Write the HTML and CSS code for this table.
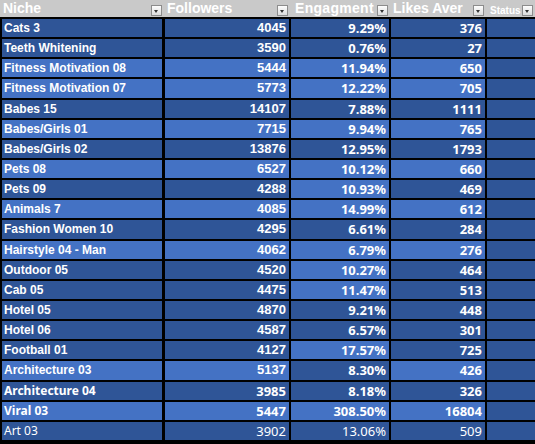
FILE: index.html
```html
<!DOCTYPE html>
<html lang="en">
<head>
  <meta charset="UTF-8">
  <meta name="viewport" content="width=device-width, initial-scale=1.0">
  <title>Niche stats</title>
  <link rel="stylesheet" href="styles.css">
</head>
<body>
  <div class="head">
    <div class="hcell"><span>Niche</span><i class="dd"></i></div>
    <div class="hcell"><span>Followers</span><i class="dd"></i></div>
    <div class="hcell eng"><span>Engagment</span><i class="dd"></i></div>
    <div class="hcell"><span>Likes Aver</span><i class="dd"></i></div>
    <div class="hcell small"><span>Status</span><i class="dd"></i></div>
  </div>

  <div class="rows">
    <div class="row arial"><div class="c dk">Cats 3</div><div class="c dk n">4045</div><div class="c dk n cal">9.29%</div><div class="c dk n cal">376</div><div class="c dk"></div></div>
    <div class="row arial"><div class="c dk">Teeth Whitening</div><div class="c dk n">3590</div><div class="c dk n cal">0.76%</div><div class="c dk n cal">27</div><div class="c dk"></div></div>
    <div class="row arial"><div class="c lt">Fitness Motivation 08</div><div class="c lt n">5444</div><div class="c lt n cal">11.94%</div><div class="c lt n cal">650</div><div class="c dk"></div></div>
    <div class="row arial"><div class="c lt">Fitness Motivation 07</div><div class="c lt n">5773</div><div class="c lt n cal">12.22%</div><div class="c lt n cal">705</div><div class="c dk"></div></div>
    <div class="row arial"><div class="c dk">Babes 15</div><div class="c dk n">14107</div><div class="c dk n cal">7.88%</div><div class="c dk n cal">1111</div><div class="c dk"></div></div>
    <div class="row arial"><div class="c lt">Babes/Girls 01</div><div class="c lt n">7715</div><div class="c lt n cal">9.94%</div><div class="c lt n cal">765</div><div class="c dk"></div></div>
    <div class="row arial"><div class="c dk">Babes/Girls 02</div><div class="c dk n">13876</div><div class="c dk n cal">12.95%</div><div class="c dk n cal">1793</div><div class="c dk"></div></div>
    <div class="row arial"><div class="c lt">Pets 08</div><div class="c lt n">6527</div><div class="c lt n cal">10.12%</div><div class="c lt n cal">660</div><div class="c dk"></div></div>
    <div class="row arial"><div class="c dk">Pets 09</div><div class="c dk n">4288</div><div class="c lt n cal">10.93%</div><div class="c dk n cal">469</div><div class="c dk"></div></div>
    <div class="row arial"><div class="c lt">Animals 7</div><div class="c lt n">4085</div><div class="c lt n cal">14.99%</div><div class="c lt n cal">612</div><div class="c dk"></div></div>
    <div class="row arial"><div class="c dk">Fashion Women 10</div><div class="c dk n">4295</div><div class="c dk n cal">6.61%</div><div class="c dk n cal">284</div><div class="c dk"></div></div>
    <div class="row arial"><div class="c lt">Hairstyle 04 - Man</div><div class="c lt n">4062</div><div class="c lt n cal">6.79%</div><div class="c lt n cal">276</div><div class="c dk"></div></div>
    <div class="row arial"><div class="c dk">Outdoor 05</div><div class="c dk n">4520</div><div class="c lt n cal">10.27%</div><div class="c dk n cal">464</div><div class="c dk"></div></div>
    <div class="row arial"><div class="c dk">Cab 05</div><div class="c dk n">4475</div><div class="c lt n cal">11.47%</div><div class="c dk n cal">513</div><div class="c dk"></div></div>
    <div class="row arial"><div class="c dk">Hotel 05</div><div class="c dk n">4870</div><div class="c dk n cal">9.21%</div><div class="c dk n cal">448</div><div class="c dk"></div></div>
    <div class="row arial"><div class="c dk">Hotel 06</div><div class="c dk n">4587</div><div class="c dk n cal">6.57%</div><div class="c dk n cal">301</div><div class="c dk"></div></div>
    <div class="row arial"><div class="c dk">Football 01</div><div class="c dk n">4127</div><div class="c lt n cal">17.57%</div><div class="c dk n cal">725</div><div class="c dk"></div></div>
    <div class="row arial"><div class="c lt">Architecture 03</div><div class="c lt n">5137</div><div class="c dk n cal">8.30%</div><div class="c lt n cal">426</div><div class="c dk"></div></div>
    <div class="row"><div class="c dk cal name">Architecture 04</div><div class="c dk n cal">3985</div><div class="c dk n cal">8.18%</div><div class="c dk n cal">326</div><div class="c dk"></div></div>
    <div class="row"><div class="c lt cal name">Viral 03</div><div class="c lt n cal">5447</div><div class="c lt n cal">308.50%</div><div class="c lt n cal">16804</div><div class="c dk"></div></div>
    <div class="row plain"><div class="c dk cal name">Art 03</div><div class="c dk n cal">3902</div><div class="c dk n cal">13.06%</div><div class="c dk n cal">509</div><div class="c dk"></div></div>
  </div>
</body>
</html>
```

FILE: styles.css
```css
body{
  margin: 0;
  background: #000;
  overflow: hidden;
  font-family: "Liberation Sans", Arial, sans-serif;
  color: #fff;
}

/* header strip */
.head{
  display: grid;
  grid-template-columns: 164px 126px 100px 96px 1fr;
  height: 17px;
  background: #c9c9c9;
  font-weight: bold;
  font-size: 14px;
  line-height: 17px;
}
.hcell{
  display: flex;
  align-items: center;
  justify-content: space-between;
  padding: 0 2px 0 3px;
  overflow: hidden;
  white-space: nowrap;
}
.hcell.eng{
  padding-left: 5px;
  letter-spacing: 0.3px;
}
.hcell.small{
  font-size: 10px;
  padding-left: 4px;
}
.hcell.small span{
  padding-top: 3px;
}
.dd{
  position: relative;
  flex: none;
  width: 9px;
  height: 9px;
  margin-top: 3px;
  border: 1px solid #8c8c8c;
  background: linear-gradient(#fdfdfd, #dcdcdc);
}
.dd::after{
  content: "";
  position: absolute;
  left: 2px;
  top: 4px;
  border-left: 2.5px solid transparent;
  border-right: 2.5px solid transparent;
  border-top: 3px solid #333;
}

/* data rows */
.rows{
  display: flex;
  flex-direction: column;
  gap: 2px;
  padding: 2px 0 0 2px;
}
.row{
  display: grid;
  grid-template-columns: 161px 124px 98px 94px 60px;
  column-gap: 2px;
  height: 18.15px;
}
.row .c:first-child{
  margin-right: 1px;
}
.c{
  font-size: 12px;
  font-weight: bold;
  line-height: 18px;
  padding: 0 3px 0 2px;
  white-space: nowrap;
  overflow: hidden;
}
.c.n{
  text-align: right;
  font-size: 13px;
  padding-right: 3px;
}
.cal{
  font-family: "Noto Sans", "Open Sans", sans-serif;
  font-size: 13px;
}
.cal.name{
  font-size: 12px;
}
.plain .c{
  font-weight: normal;
}
.dk{
  background: #2f5597;
}
.lt{
  background: #4472c4;
}
```
